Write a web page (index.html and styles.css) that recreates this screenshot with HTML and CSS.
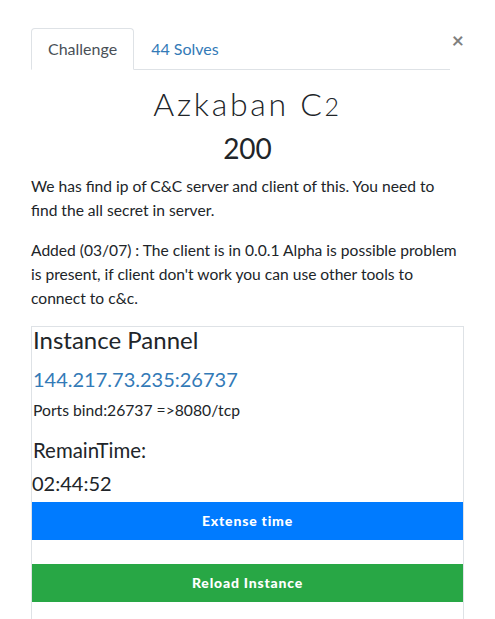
FILE: index.html
```html
<!DOCTYPE html>
<html>
<head>
<meta charset="utf-8">
<link rel="stylesheet" href="styles.css">
</head>
<body>
<div class="modal">
  <div class="header">
    <ul class="tabs">
      <li class="tab active">Challenge</li>
      <li class="tab link">44 Solves</li>
    </ul>
    <span class="close">&times;</span>
  </div>
  <h2 class="title">Azkaban C<span class="os">2</span></h2>
  <h3 class="value">200</h3>
  <p class="desc">We has find ip of C&amp;C server and client of this. You need to find the all secret in server.</p>
  <p class="desc">Added (03/07) : The client is in 0.0.1 Alpha is possible problem is present, if client don't work you can use other tools to connect to c&amp;c.</p>
  <div class="panel">
    <div class="panel-title">Instance Pannel</div>
    <div class="ip">144.217.73.235:26737</div>
    <div class="ports">Ports bind:26737 =&gt;8080/tcp</div>
    <div class="remain">RemainTime:</div>
    <div class="time">02:44:52</div>
    <div class="btn blue">Extense time</div>
    <div class="btn green">Reload Instance</div>
    <div class="spacer"></div>
  </div>
</div>
</body>
</html>
```
FILE: styles.css
```css
html, body {
  margin: 0;
  background: #fff;
}
body {
  font-family: Lato, "Open Sans", sans-serif;
  color: #212529;
  font-size: 16px;
  line-height: 24px;
}
.modal {
  width: 433px;
  padding: 28px 0 0 31px;
}
.header {
  display: flex;
  align-items: flex-start;
}
.tabs {
  list-style: none;
  margin: 0;
  padding: 0;
  display: flex;
  width: 420px;
  border-bottom: 1px solid #dee2e6;
}
.tab {
  padding: 8px 16px;
  border: 1px solid transparent;
  border-radius: 4px 4px 0 0;
  margin-bottom: -1px;
  line-height: 24px;
  font-size: 16px;
}
.tab.active {
  color: #495057;
  border-color: #dee2e6 #dee2e6 #fff;
  background: #fff;
}
.tab.link {
  color: #337ab7;
}
.close {
  margin-left: 2px;
  margin-top: 0;
  font-size: 21px;
  font-weight: 700;
  line-height: 24px;
  color: #000;
  opacity: .5;
}
.title {
  margin: 15px 0 0;
  text-align: center;
  font-size: 32px;
  font-weight: 300;
  letter-spacing: 2.7px;
  line-height: 1.2;
  color: #212529;
}
.os {
  font-size: 25px;
}
.value {
  margin: 9px 0 0;
  text-align: center;
  font-size: 28px;
  font-weight: 400;
  line-height: 1.2;
}
.desc {
  margin: 8px 0 16px;
  font-size: 15.6px;
}
.desc + .desc {
  margin-top: 0;
}
.panel {
  border: 1px solid #dee2e6;
  border-bottom: none;
  height: 300px;
}
.panel-title {
  font-size: 24px;
  line-height: 26px;
  padding-left: 1px;
}
.ip {
  margin-top: 14px;
  font-size: 20px;
  line-height: 24px;
  color: #337ab7;
  padding-left: 1px;
}
.ports {
  margin-top: 7px;
  font-size: 15.7px;
  line-height: 24px;
  padding-left: 1px;
}
.remain {
  margin-top: 16px;
  font-size: 20.4px;
  line-height: 24px;
  padding-left: 1px;
}
.time {
  margin-top: 9px;
  font-size: 20px;
  line-height: 24px;
}
.btn {
  height: 38px;
  line-height: 38px;
  text-align: center;
  color: #fff;
  font-weight: 900;
  font-size: 14px;
  letter-spacing: 0.8px;
}
.blue {
  margin-top: 7px;
  background: #007bff;
}
.green {
  margin-top: 24px;
  background: #28a745;
}
```
